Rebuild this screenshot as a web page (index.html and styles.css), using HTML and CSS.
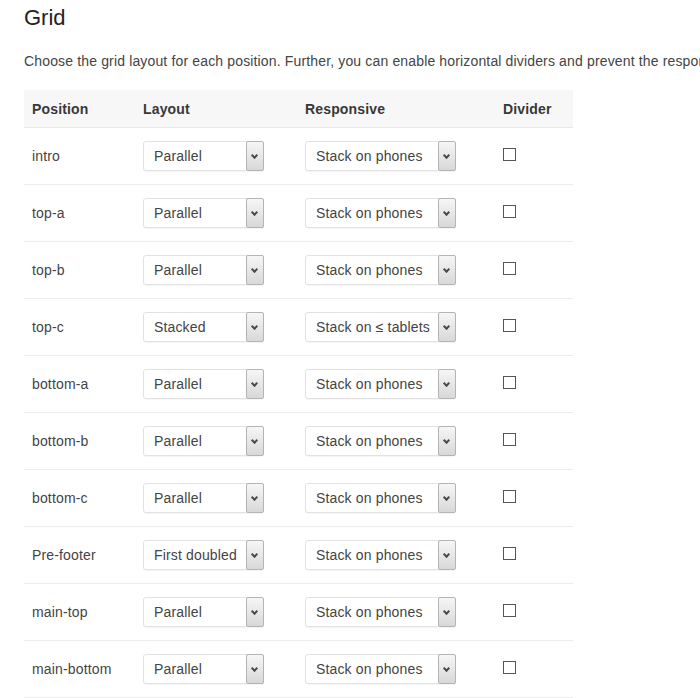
FILE: index.html
```html
<!DOCTYPE html>
<html>
<head>
<meta charset="utf-8">
<link rel="stylesheet" href="styles.css">
</head>
<body>
<div class="page">
  <h1 class="title">Grid</h1>
  <p class="lead">Choose the grid layout for each position. Further, you can enable horizontal dividers and prevent the responsive behavior.</p>
  <table class="grid">
    <thead>
      <tr><th class="c-pos">Position</th><th class="c-lay">Layout</th><th class="c-resp">Responsive</th><th class="c-div">Divider</th></tr>
    </thead>
    <tbody>
      <tr><td>intro</td><td><div class="sel sel-lay"><span class="val">Parallel</span><span class="arr"></span></div></td><td><div class="sel sel-resp"><span class="val">Stack on phones</span><span class="arr"></span></div></td><td><span class="chk"></span></td></tr>
      <tr><td>top-a</td><td><div class="sel sel-lay"><span class="val">Parallel</span><span class="arr"></span></div></td><td><div class="sel sel-resp"><span class="val">Stack on phones</span><span class="arr"></span></div></td><td><span class="chk"></span></td></tr>
      <tr><td>top-b</td><td><div class="sel sel-lay"><span class="val">Parallel</span><span class="arr"></span></div></td><td><div class="sel sel-resp"><span class="val">Stack on phones</span><span class="arr"></span></div></td><td><span class="chk"></span></td></tr>
      <tr><td>top-c</td><td><div class="sel sel-lay"><span class="val">Stacked</span><span class="arr"></span></div></td><td><div class="sel sel-resp"><span class="val">Stack on ≤ tablets</span><span class="arr"></span></div></td><td><span class="chk"></span></td></tr>
      <tr><td>bottom-a</td><td><div class="sel sel-lay"><span class="val">Parallel</span><span class="arr"></span></div></td><td><div class="sel sel-resp"><span class="val">Stack on phones</span><span class="arr"></span></div></td><td><span class="chk"></span></td></tr>
      <tr><td>bottom-b</td><td><div class="sel sel-lay"><span class="val">Parallel</span><span class="arr"></span></div></td><td><div class="sel sel-resp"><span class="val">Stack on phones</span><span class="arr"></span></div></td><td><span class="chk"></span></td></tr>
      <tr><td>bottom-c</td><td><div class="sel sel-lay"><span class="val">Parallel</span><span class="arr"></span></div></td><td><div class="sel sel-resp"><span class="val">Stack on phones</span><span class="arr"></span></div></td><td><span class="chk"></span></td></tr>
      <tr><td>Pre-footer</td><td><div class="sel sel-lay"><span class="val">First doubled</span><span class="arr"></span></div></td><td><div class="sel sel-resp"><span class="val">Stack on phones</span><span class="arr"></span></div></td><td><span class="chk"></span></td></tr>
      <tr><td>main-top</td><td><div class="sel sel-lay"><span class="val">Parallel</span><span class="arr"></span></div></td><td><div class="sel sel-resp"><span class="val">Stack on phones</span><span class="arr"></span></div></td><td><span class="chk"></span></td></tr>
      <tr><td>main-bottom</td><td><div class="sel sel-lay"><span class="val">Parallel</span><span class="arr"></span></div></td><td><div class="sel sel-resp"><span class="val">Stack on phones</span><span class="arr"></span></div></td><td><span class="chk"></span></td></tr>
    </tbody>
  </table>
</div>
</body>
</html>
```
FILE: styles.css
```css
html, body {
  margin: 0;
  padding: 0;
  background: #fff;
}
body {
  font-family: "Liberation Sans", Arial, sans-serif;
  font-size: 14px;
  letter-spacing: 0.15px;
  color: #444;
  overflow: hidden;
}
.page {
  padding: 0 0 0 24px;
  white-space: nowrap;
}
.title {
  margin: 0;
  padding-top: 5px;
  font-size: 22px;
  font-weight: normal;
  letter-spacing: 0;
  line-height: 26px;
  color: #222;
}
.lead {
  margin: 0;
  padding-top: 20px;
  line-height: 20px;
  color: #444;
}
.grid {
  margin-top: 19px;
  border-collapse: collapse;
  width: 549px;
  table-layout: fixed;
}
.grid th {
  background: #f7f7f7;
  text-align: left;
  font-weight: bold;
  color: #383838;
  height: 37px;
  padding: 0 8px;
  border-bottom: 1px solid #e8e8e8;
  vertical-align: middle;
}
.c-pos { width: 95px; }
.c-lay { width: 146px; }
.c-resp { width: 182px; }
.c-div { width: 62px; }
.grid td {
  height: 56px;
  padding: 0 8px;
  border-bottom: 1px solid #ececec;
  vertical-align: middle;
}
.sel {
  display: flex;
  align-items: stretch;
  height: 28px;
  border: 1px solid #e2e2e2;
  border-radius: 3px;
  background: #fff;
  box-shadow: 0 1px 1px rgba(0,0,0,0.04);
}
.sel-lay { width: 119px; }
.sel-resp { width: 149px; }
.sel .val {
  flex: 1;
  padding-left: 10px;
  line-height: 28px;
  color: #444;
  overflow: hidden;
}
.sel .arr {
  position: relative;
  width: 16px;
  margin: -1px -1px -1px 0;
  border: 1px solid #b4b4b4;
  border-radius: 2px;
  background: linear-gradient(#f6f6f6, #d8d8d8);
}
.sel .arr::after {
  content: "";
  position: absolute;
  left: 5px;
  top: 11px;
  width: 3px;
  height: 3px;
  border-right: 2px solid #4a4a4a;
  border-bottom: 2px solid #4a4a4a;
  transform: rotate(45deg);
}
.chk {
  display: block;
  width: 11px;
  height: 11px;
  border: 1px solid #555;
  background: #fff;
  margin-top: -4px;
}
```
